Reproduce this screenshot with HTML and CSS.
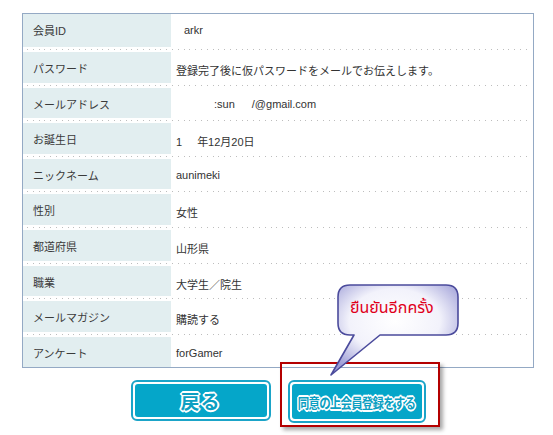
FILE: index.html
```html
<!DOCTYPE html>
<html>
<head>
<meta charset="utf-8">
<title>会員登録 確認</title>
<link rel="stylesheet" href="styles.css">
</head>
<body>
<div class="page">
  <div class="confirm">
    <div class="row first">
      <div class="label">会員ID</div>
      <div class="value"><span class="gap-id"></span>arkr</div>
    </div>
    <div class="row">
      <div class="label">パスワード</div>
      <div class="value">登録完了後に仮パスワードをメールでお伝えします。</div>
    </div>
    <div class="row">
      <div class="label">メールアドレス</div>
      <div class="value"><span class="gap-mail"></span>:sun<span class="gap-at"></span>/@gmail.com</div>
    </div>
    <div class="row">
      <div class="label">お誕生日</div>
      <div class="value">1<span class="gap-year"></span>年12月20日</div>
    </div>
    <div class="row">
      <div class="label">ニックネーム</div>
      <div class="value">aunimeki</div>
    </div>
    <div class="row">
      <div class="label">性別</div>
      <div class="value">女性</div>
    </div>
    <div class="row">
      <div class="label">都道府県</div>
      <div class="value">山形県</div>
    </div>
    <div class="row">
      <div class="label">職業</div>
      <div class="value">大学生／院生</div>
    </div>
    <div class="row">
      <div class="label">メールマガジン</div>
      <div class="value">購読する</div>
    </div>
    <div class="row">
      <div class="label">アンケート</div>
      <div class="value">forGamer</div>
    </div>
  </div>

  <div class="actions">
    <a class="btn back"><span class="btn-inner"><span class="btn-text">戻る</span></span></a>
    <div class="submit-wrap">
      <a class="btn submit"><span class="btn-inner"><span class="btn-text">同意の上会員登録をする</span></span></a>
      <div class="mark"></div>
    </div>
  </div>

  <!-- callout pointing at the submit button -->
  <div class="callout">
    <svg width="134" height="96" viewBox="0 0 134 96">
      <defs>
        <radialGradient id="bubbleFill" cx="50%" cy="40%" r="65%">
          <stop offset="0" stop-color="#ffffff"/>
          <stop offset="0.55" stop-color="#f2f2fb"/>
          <stop offset="1" stop-color="#9c9cd6"/>
        </radialGradient>
      </defs>
      <path d="M22,2 H118 Q130,2 130,14 V40 Q130,52 118,52 H52 L3,92 L26,52 H22 Q10,52 10,40 V14 Q10,2 22,2 Z"
            fill="url(#bubbleFill)" stroke="#4b4b9c" stroke-width="1.6" stroke-linejoin="round"/>
    </svg>
    <span class="callout-text">ยืนยันอีกครั้ง</span>
  </div>
</div>
</body>
</html>
```

FILE: styles.css
```css
body{margin:0;background:#ffffff;}
.page{position:relative;width:553px;height:435px;padding-top:13px;box-sizing:border-box;
  font-family:"Liberation Sans","Noto Sans CJK JP",sans-serif;font-size:11px;color:#333333;}

/* confirmation list */
.confirm{margin-left:22px;width:512px;box-sizing:border-box;border:1px solid #94a9c4;}
.row{display:flex;height:30.6px;}
.row.first{height:33px;}
.row + .row{padding-top:5px;
  background-image:repeating-linear-gradient(to right,#bdbdbd 0 1px,transparent 1px 5.8px);
  background-size:calc(100% - 8px) 1px;background-position:4px 2px;background-repeat:no-repeat;}
.label{width:148px;flex:none;box-sizing:border-box;padding:8px 0 0 10px;background:#e2eef0;color:#3a3a3a;}
.value{flex:1;padding:10px 0 0 5px;}
.gap-id{display:inline-block;width:8px;}
.gap-mail{display:inline-block;width:38px;}
.gap-at{display:inline-block;width:17px;}
.gap-year{display:inline-block;width:15px;}

/* buttons */
.actions{display:flex;justify-content:center;align-items:center;gap:17px;margin-left:22px;width:512px;margin-top:10px;}
.btn{display:block;box-sizing:border-box;border:2px solid #1ba4c8;border-radius:6px;padding:2px;background:#ffffff;}
.btn-inner{display:flex;align-items:center;justify-content:center;height:100%;border-radius:3px;background:#05a6c9;}
.btn-text{color:#0c9fc2;font-weight:bold;
  text-shadow:1px 0 0 #fff,-1px 0 0 #fff,0 1px 0 #fff,0 -1px 0 #fff,1px 1px 0 #fff,-1px -1px 0 #fff,1px -1px 0 #fff,-1px 1px 0 #fff,
    2px 0 0 #fff,-2px 0 0 #fff,0 2px 0 #fff,0 -2px 0 #fff;}
.back{width:140px;height:41px;}
.back .btn-text{font-size:19px;letter-spacing:1px;}
.submit{width:138px;height:43px;}
.submit .btn-text{font-size:14px;letter-spacing:-1px;transform:scaleX(0.82);white-space:nowrap;}
.submit-wrap{position:relative;margin-top:2px;}

/* red frame around the submit button */
.mark{position:absolute;left:-8px;top:-18px;right:-14px;bottom:-4px;border:2px solid #b40000;
  box-shadow:3px 3px 4px rgba(0,0,0,0.35);pointer-events:none;}

.callout{position:absolute;left:328px;top:283px;width:134px;height:96px;}
.callout svg{display:block;}
.callout-text{position:absolute;left:22px;top:13px;color:#e0001b;font-size:16px;
  font-family:"Noto Sans Thai","DejaVu Sans",sans-serif;}
```
